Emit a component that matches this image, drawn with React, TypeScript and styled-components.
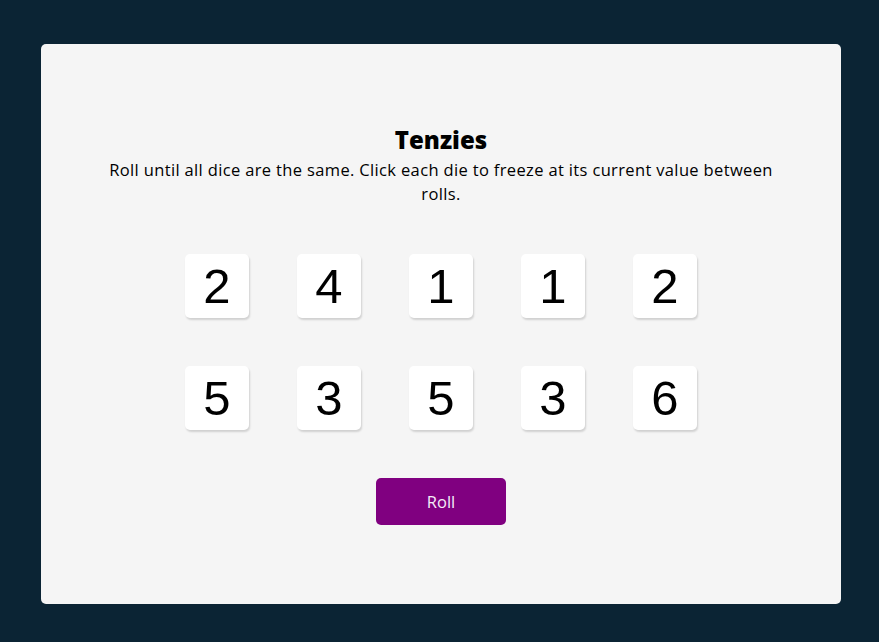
import React from "react";
import styled, { createGlobalStyle } from "styled-components";

const GlobalStyle = createGlobalStyle`
  html, body {
    margin: 0;
    padding: 0;
    background: #0b2434;
  }
  body {
    font-family: "Open Sans", "Noto Sans", sans-serif;
  }
  * { box-sizing: border-box; }
`;

const Page = styled.main`
  width: 879px;
  height: 642px;
  padding: 44px 38px 38px 41px;
  display: flex;
`;

const Card = styled.section`
  flex: 1;
  background: #f5f5f5;
  border-radius: 5px;
  padding-top: 2px;
  display: flex;
  flex-direction: column;
  align-items: center;
  justify-content: center;
`;

const Title = styled.h1`
  margin: 0;
  font-family: "Open Sans", "Noto Sans", sans-serif;
  font-weight: 800;
  font-size: 24px;
  line-height: 28px;
  color: #000;
`;

const Subtitle = styled.p`
  margin: 4px 0 0;
  width: 680px;
  text-align: center;
  font-size: 16.5px;
  letter-spacing: 0.35px;
  line-height: 24px;
  color: #000;
  font-family: "Open Sans", "Noto Sans", sans-serif;
`;

const DiceGrid = styled.div`
  margin-top: 48px;
  display: grid;
  grid-template-columns: repeat(5, 64px);
  grid-auto-rows: 64px;
  column-gap: 48px;
  row-gap: 48px;
`;

const Die = styled.button<{ $held?: boolean }>`
  width: 64px;
  height: 64px;
  border: none;
  padding: 0;
  border-radius: 5px;
  background: ${(p) => (p.$held ? "#59e391" : "#ffffff")};
  box-shadow: 1px 2px 2px rgba(0, 0, 0, 0.15);
  display: flex;
  align-items: center;
  justify-content: center;
  font-family: "Liberation Sans", Arial, sans-serif;
  font-size: 49px;
  font-weight: 400;
  color: #000;
  cursor: pointer;
`;

const RollButton = styled.button`
  margin-top: 48px;
  width: 130px;
  height: 47px;
  border: none;
  border-radius: 5px;
  background: #800080;
  color: #f4ecf8;
  font-family: "Open Sans", "Noto Sans", sans-serif;
  font-size: 16.5px;
  cursor: pointer;
`;

const dice = [2, 4, 1, 1, 2, 5, 3, 5, 3, 6];

export default function App() {
  return (
    <>
      <GlobalStyle />
      <Page>
        <Card>
          <Title>Tenzies</Title>
          <Subtitle>
            Roll until all dice are the same. Click each die to freeze at its
            current value between rolls.
          </Subtitle>
          <DiceGrid>
            {dice.map((v, i) => (
              <Die key={i}>{v}</Die>
            ))}
          </DiceGrid>
          <RollButton>Roll</RollButton>
        </Card>
      </Page>
    </>
  );
}
